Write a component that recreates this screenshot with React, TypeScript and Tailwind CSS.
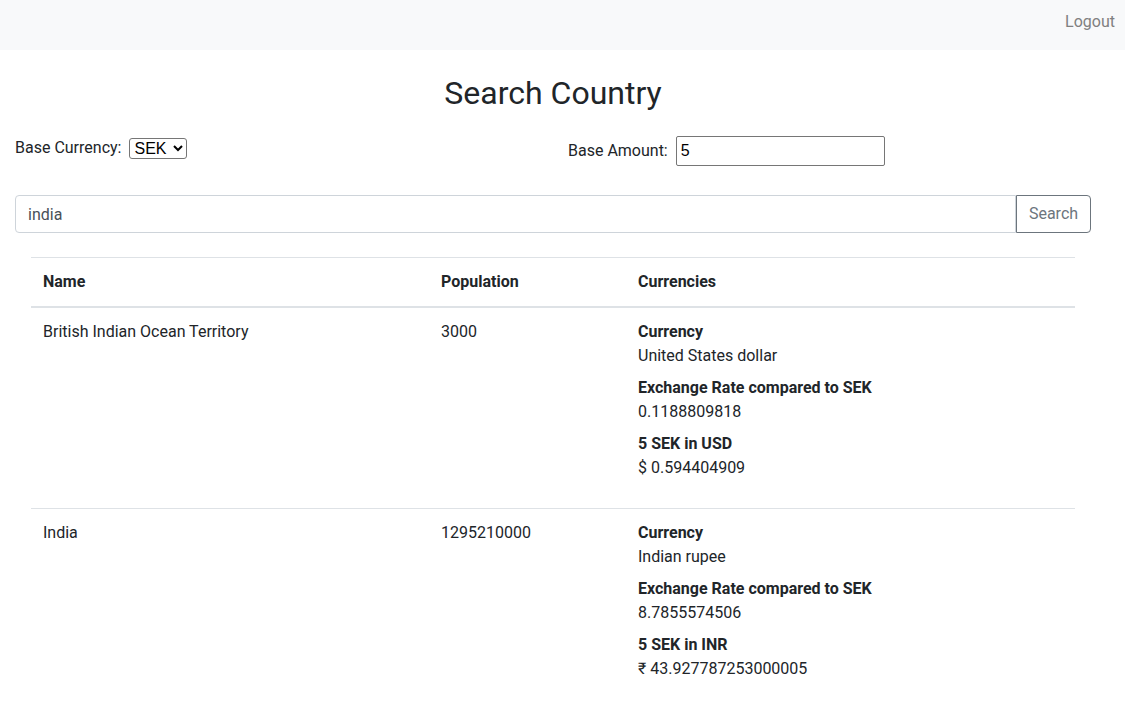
import React, { useState } from 'react';

type Country = {
    name: string;
    population: number;
    currency: string;
    code: string;
    symbol: string;
    rate: string;
    converted: string;
};

const countries: Country[] = [
    {
        name: 'British Indian Ocean Territory',
        population: 3000,
        currency: 'United States dollar',
        code: 'USD',
        symbol: '$',
        rate: '0.1188809818',
        converted: '0.594404909',
    },
    {
        name: 'India',
        population: 1295210000,
        currency: 'Indian rupee',
        code: 'INR',
        symbol: '₹',
        rate: '8.7855574506',
        converted: '43.927787253000005',
    },
];

const App: React.FC = () => {
    const [base, setBase] = useState('SEK');
    const [amount, setAmount] = useState('5');
    const [query, setQuery] = useState('india');

    return (
        <div className="min-h-screen bg-white text-[#212529] font-['Roboto',sans-serif] text-[16px] leading-[24px]">
            {/* Navbar */}
            <nav className="h-[50px] bg-[#f8f9fa] flex justify-end items-start pt-[10px] pr-[10px]">
                <a href="#" className="text-[#808080] hover:text-[#555]">Logout</a>
            </nav>

            <div className="w-[1106px] px-[15px]">
                <h2 className="mt-[24px] mb-[8px] text-center text-[32px] leading-[38.4px] font-normal">
                    Search Country
                </h2>

                {/* Base currency / amount */}
                <div className="flex items-start">
                    <div className="w-[538px] mt-[16px] h-[24px] flex items-center">
                        <label className="mr-[7px]">Base Currency:</label>
                        <select
                            value={base}
                            onChange={(e) => setBase(e.target.value)}
                            className="ml-[1px] h-[21px] w-[58px] border border-[#767676] rounded-[3px] pl-0 text-[16px] leading-[19px] font-['Liberation_Sans',sans-serif] text-black"
                        >
                            <option>SEK</option>
                            <option>USD</option>
                            <option>EUR</option>
                        </select>
                    </div>
                    <div className="flex-1 pl-[15px] mt-[16px] flex items-center">
                        <label className="mr-[8px]">Base Amount:</label>
                        <input
                            value={amount}
                            onChange={(e) => setAmount(e.target.value)}
                            className="h-[30px] w-[209px] border border-[#767676] rounded-[2px] px-[4px] text-[16px] font-['Liberation_Sans',sans-serif] text-black outline-none"
                        />
                    </div>
                </div>

                {/* Search group */}
                <div className="mt-[29px] flex">
                    <input
                        value={query}
                        onChange={(e) => setQuery(e.target.value)}
                        className="h-[38px] flex-1 border border-[#ced4da] rounded-l-[4px] px-[12px] text-[#495057] outline-none"
                    />
                    <button className="h-[38px] w-[75px] border border-[#6c757d] rounded-r-[4px] text-[#6c757d] hover:bg-[#6c757d] hover:text-white">
                        Search
                    </button>
                </div>

                {/* Results table */}
                <table className="mx-[16px] mt-[24px] w-[1044px] border-collapse text-left">
                    <thead>
                        <tr className="border-t border-[#dee2e6] border-b-2">
                            <th className="w-[398px] p-[12px] font-bold align-bottom">Name</th>
                            <th className="w-[197px] p-[12px] font-bold align-bottom">Population</th>
                            <th className="p-[12px] font-bold align-bottom">Currencies</th>
                        </tr>
                    </thead>
                    <tbody>
                        {countries.map((c) => (
                            <tr key={c.name} className="border-t border-[#dee2e6]">
                                <td className="p-[12px] align-top">{c.name}</td>
                                <td className="p-[12px] align-top">{c.population}</td>
                                <td className="p-[12px] align-top">
                                    <dl className="mb-[16px]">
                                        <dt className="font-bold">Currency</dt>
                                        <dd className="mb-[8px]">{c.currency}</dd>
                                        <dt className="font-bold">Exchange Rate compared to {base}</dt>
                                        <dd className="mb-[8px]">{c.rate}</dd>
                                        <dt className="font-bold">
                                            {amount} {base} in {c.code}
                                        </dt>
                                        <dd>
                                            {c.symbol} {c.converted}
                                        </dd>
                                    </dl>
                                </td>
                            </tr>
                        ))}
                    </tbody>
                </table>
            </div>
        </div>
    );
};

export default App;
